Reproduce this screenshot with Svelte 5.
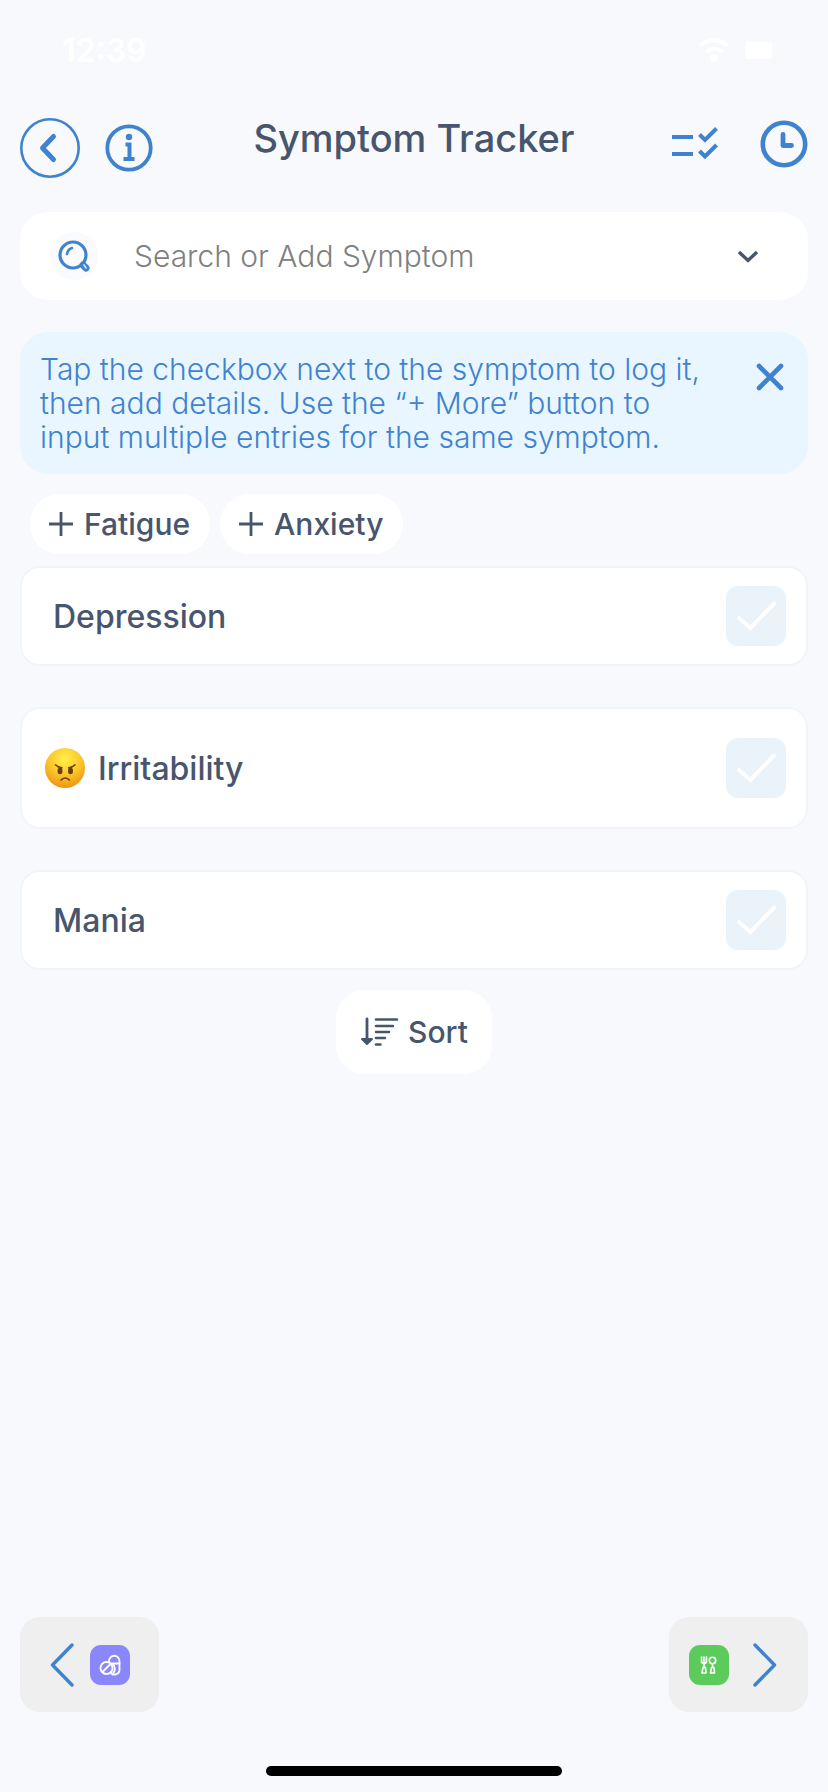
<script lang="ts">
    let query = "";
    let showTip = true;

    let suggestions = ["Fatigue", "Anxiety"];

    let symptoms = [
        { name: "Depression", angry: false, logged: false },
        { name: "Irritability", angry: true, logged: false },
        { name: "Mania", angry: false, logged: false },
    ];
</script>

<div class="screen">
    <div class="status">
        <span>12:39</span>
        <div class="statusIcons">
            <svg width="32" height="26" viewBox="0 0 32 26" stroke="#fff" stroke-width="4">
                <path d="M2 9a20 20 0 0 1 28 0M8 15a12 12 0 0 1 16 0" />
                <circle cx="16" cy="21" r="2" fill="#fff" />
            </svg>
            <svg width="48" height="26" viewBox="0 0 48 26">
                <rect x="5" y="5" width="27" height="17" rx="3" fill="#fff" />
            </svg>
        </div>
    </div>

    <header>
        <div class="left">
            <button class="icon" aria-label="Back">
                <svg width="60" height="60" viewBox="0 0 60 60">
                    <circle cx="30" cy="30" r="28.7" stroke-width="2.6" />
                    <path d="M33.5 18.5L22.5 30l11 11.5" stroke-width="5" />
                </svg>
            </button>
            <button class="icon" aria-label="Information">
                <svg width="48" height="48" viewBox="0 0 48 48">
                    <circle cx="24" cy="24" r="21.7" stroke-width="3.8" />
                    <circle cx="24" cy="13" r="3.2" fill="#3f83cf" stroke="none" />
                    <path d="M20.500 20.500h4v14.500M18.500 35h11" stroke-width="4" stroke-linecap="butt" stroke-linejoin="miter" />
                </svg>
            </button>
        </div>
        <h1>Symptom Tracker</h1>
        <div class="right">
            <button class="icon" aria-label="Select symptoms">
                <svg width="48" height="48" viewBox="0 0 48 48">
                    <path
                        d="M2 17h21M2 34h21M29.500 14.500l5.500 5.500 11.500-11.500M29.500 31l5.500 5.500 11.500-11.500"
                        stroke-width="4"
                        stroke-linecap="butt"
                        stroke-linejoin="miter"
                    />
                </svg>
            </button>
            <button class="icon" aria-label="History">
                <svg width="48" height="48" viewBox="0 0 48 48">
                    <circle cx="24" cy="24" r="21.2" stroke-width="4.6" />
                    <path d="M23 14.500v11h8.500" stroke-width="4.8" />
                </svg>
            </button>
        </div>
    </header>

    <main>
        <div class="search">
            <label for="search" aria-label="Search or Add Symptom">
                <svg width="48" height="48" viewBox="0 0 48 48">
                    <circle cx="24" cy="24" r="24" fill="#fafbfe" />
                    <circle cx="23" cy="23" r="13" stroke="#3f83cf" stroke-width="3.2" />
                    <path d="M17 22q1-5 5-6" stroke="#3f83cf" stroke-width="2.600" stroke-linecap="round" />
                    <path d="M33 33l3 3" stroke="#3f83cf" stroke-width="7" stroke-linecap="round" />
                    <path d="M34 33l2 3" stroke="#d7e6f6" stroke-width="1.600" stroke-linecap="round" />
                </svg>
            </label>
            <input id="search" type="text" placeholder="Search or Add Symptom" bind:value={query} />
            <button class="icon" aria-label="Show all symptoms">
                <svg class="dark" width="24" height="24" viewBox="0 0 24 24">
                    <path d="M3 8l9 8.500L21 8" stroke-width="3.4" stroke-linecap="butt" stroke-linejoin="miter" />
                </svg>
            </button>
        </div>

        {#if showTip}
            <div class="tip">
                <p>
                    Tap the checkbox next to the symptom to log it, then add details. Use the “+
                    More” button to input multiple entries for the same symptom.
                </p>
                <button class="icon" aria-label="Close" on:click={() => (showTip = false)}>
                    <svg width="28" height="28" viewBox="0 0 28 28">
                        <path d="M3 3l22 22M25 3L3 25" stroke-width="4.6" />
                    </svg>
                </button>
            </div>
        {/if}

        <div class="chips">
            {#each suggestions as suggestion}
                <button class="chip">
                    <svg class="dark" width="26" height="26" viewBox="0 0 26 26">
                        <path d="M13 1v24M1 13h24" stroke-width="2.8" stroke-linecap="butt" />
                    </svg>
                    {suggestion}
                </button>
            {/each}
        </div>

        <div class="list">
            {#each symptoms as symptom}
                <label class="card" class:tall={symptom.angry}>
                    {#if symptom.angry}
                        <svg class="emoji" width="40" height="40" viewBox="0 0 40 40">
                            <defs>
                                <radialGradient id="face" cx="50%" cy="28%" r="72%">
                                    <stop offset="0" stop-color="#fff04a" />
                                    <stop offset="0.5" stop-color="#fdcb2e" />
                                    <stop offset="1" stop-color="#ee9413" />
                                </radialGradient>
                            </defs>
                            <circle cx="20" cy="20" r="20" fill="url(#face)" />
                            <ellipse cx="15" cy="23" rx="2.5" ry="3.2" fill="#6b3d0a" />
                            <ellipse cx="25.5" cy="23" rx="2.5" ry="3.2" fill="#6b3d0a" />
                            <path
                                d="M10 16.500q3 3 7.500 3.500M30.500 16.500q-3 3-7.500 3.500M15.500 32.500q4.700-5 9.400 0"
                                stroke="#6b3d0a"
                                stroke-width="1.6"
                            />
                        </svg>
                    {/if}
                    <span class="name">{symptom.name}</span>
                    <span class="check">
                        <input type="checkbox" bind:checked={symptom.logged} />
                        <svg width="60" height="60" viewBox="0 0 60 60">
                            <path d="M13 32l11.500 10L48 17.500" stroke="#fff" stroke-width="4" stroke-linecap="round" />
                        </svg>
                    </span>
                </label>
            {/each}
        </div>

        <button class="sort">
            <svg class="dark" width="38" height="32" viewBox="0 0 38 32">
                <path d="M7 3v20" stroke-width="2.8" />
                <path d="M2 23h10l-5 5z" fill="#47566c" stroke-width="2" />
                <path d="M16 3.500h21M16 10h17M16 16h13M16 22h9M16 28.500h4.500" stroke-width="2.600" />
            </svg>
            Sort
        </button>
    </main>

    <footer>
        <button aria-label="Previous: medications">
            <svg width="24" height="44" viewBox="0 0 24 44">
                <path d="M22 2L2.500 22 22 42" stroke-width="3.4" />
            </svg>
            <svg class="tile" width="40" height="40" viewBox="0 0 40 40">
                <rect width="40" height="40" rx="11" fill="#8a86fb" />
                <g stroke="#fff" stroke-width="1.8">
                    <circle cx="16.5" cy="23" r="6" />
                    <path d="M12.500 27l8-8" />
                    <path d="M19 17v-1a5 5 0 0 1 10.500 0v8a5 5 0 0 1-9 3.500" />
                    <path d="M20.500 18.500h9M23 19q4 5-.5 10.500" />
                </g>
            </svg>
        </button>
        <button aria-label="Next: food">
            <svg class="tile" width="40" height="40" viewBox="0 0 40 40">
                <rect width="40" height="40" rx="11" fill="#5ccb5c" />
                <g stroke="#fff" stroke-width="1.6">
                    <path d="M12.500 12v4q0 2.500 2.500 2.500t2.500-2.500v-4M15 12v10.500" />
                    <circle cx="23.5" cy="15.5" r="3.2" />
                    <path d="M23.500 19v3.500M14 22.500h2.500l.5 5.500h-4zM22.500 22.500H25l.5 5.500h-4z" />
                </g>
            </svg>
            <svg width="24" height="44" viewBox="0 0 24 44">
                <path d="M2 2l19.500 20L2 42" stroke-width="3.4" />
            </svg>
        </button>
    </footer>
    <div class="homeBar"></div>
</div>

<style>
    :global(body) {
        background: #f8f9fd;
    }

    .screen {
        display: flex;
        flex-direction: column;
        box-sizing: border-box;
        min-height: 100vh;
        padding: 32px 20px 16px;

        font-family: "Inter", "Open Sans", sans-serif;
        color: #47566c;
    }

    .status {
        display: flex;
        justify-content: space-between;
        align-items: center;
        height: 36px;
        padding: 0 20px 0 42px;

        color: #fff;
        font-size: 32px;
        font-weight: 600;
    }

    .statusIcons {
        display: flex;
        gap: 10px;
    }

    svg {
        display: block;
        flex: none;
        fill: none;
    }

    button {
        border: none;
        margin: 0;
        padding: 0;
        background: none;
        font: inherit;
        color: inherit;
        cursor: pointer;
    }

    button > svg {
        stroke: #3f83cf;
        stroke-linecap: round;
        stroke-linejoin: round;
    }

    button > svg.dark {
        stroke: #47566c;
    }

    button > svg.tile {
        stroke: none;
    }

    header {
        display: grid;
        grid-template-columns: 1fr auto 1fr;
        padding-top: 48px;
    }

    .left,
    .right {
        display: flex;
        align-items: center;
        height: 64px;
    }

    .left {
        gap: 25px;
    }

    .right {
        justify-content: flex-end;
        gap: 42px;
        height: 56px;
    }

    h1 {
        margin: 0;
        font-size: 38px;
        font-weight: 500;
        line-height: 44px;
    }

    main {
        display: flex;
        flex-direction: column;
    }

    .search {
        display: flex;
        align-items: center;
        height: 88px;
        margin-top: 32px;
        padding: 0 48px 0 30px;
        background: #fff;
        border-radius: 28px;
    }

    .search input {
        flex: 1;
        min-width: 0;
        margin: 0 24px 0 36px;
        padding: 0;
        border: none;
        outline: none;
        background: none;
        font: inherit;
        font-size: 30px;
        font-weight: 300;
        color: #47566c;
    }

    .search input::placeholder {
        color: #808080;
        opacity: 1;
    }

    .tip {
        display: flex;
        align-items: flex-start;
        justify-content: space-between;
        gap: 24px;
        margin-top: 32px;
        padding: 20px 24px 20px 20px;
        background: #eaf6ff;
        border-radius: 28px;
    }

    .tip p {
        max-width: 672px;
        margin: 0;
        font-size: 30px;
        font-weight: 300;
        line-height: 34px;
        color: #3f83cf;
    }

    .tip .icon {
        margin-top: 11px;
    }

    .chips {
        display: flex;
        gap: 10px;
        padding: 20px 10px 12px;
    }

    .chip {
        display: flex;
        align-items: center;
        gap: 10px;
        height: 60px;
        padding: 0 20px 0 18px;
        background: #fff;
        border-radius: 30px;
        font-size: 30px;
        font-weight: 500;
    }

    .list {
        display: flex;
        flex-direction: column;
        gap: 41px;
    }

    .card {
        display: flex;
        align-items: center;
        box-sizing: border-box;
        height: 100px;
        padding: 0 20px 0 31px;
        border: 2px solid #f1f4f9;
        border-radius: 20px;
        background: #fff;
        cursor: pointer;
    }

    .tall {
        height: 122px;
        padding-left: 23px;
    }

    .emoji {
        margin-right: 13px;
    }

    .name {
        flex: 1;
        font-size: 32px;
        font-weight: 500;
    }

    .check {
        display: grid;
    }

    .check > * {
        grid-area: 1 / 1;
    }

    .check svg {
        pointer-events: none;
        z-index: 1;
    }

    .check input {
        appearance: none;
        width: 60px;
        height: 60px;
        margin: 0;
        border-radius: 12px;
        background: #ebf3fa;
        cursor: pointer;
    }

    .check input:checked {
        background: #3f83cf;
    }

    .sort {
        display: flex;
        align-items: center;
        align-self: center;
        gap: 10px;
        height: 84px;
        margin-top: 20px;
        padding: 0 24px;
        background: #fff;
        border-radius: 28px;
        font-size: 30px;
        font-weight: 500;
    }

    footer {
        display: flex;
        justify-content: space-between;
        margin-top: auto;
        padding-top: 40px;
    }

    footer button {
        display: flex;
        align-items: center;
        justify-content: space-between;
        box-sizing: border-box;
        width: 139px;
        height: 95px;
        padding: 0 29px 0 30px;
        background: #efefef;
        border-radius: 20px;
    }

    footer button:last-child {
        padding: 0 31px 0 20px;
    }

    .homeBar {
        align-self: center;
        width: 296px;
        height: 10px;
        margin-top: 54px;
        border-radius: 5px;
        background: #000;
    }
</style>
